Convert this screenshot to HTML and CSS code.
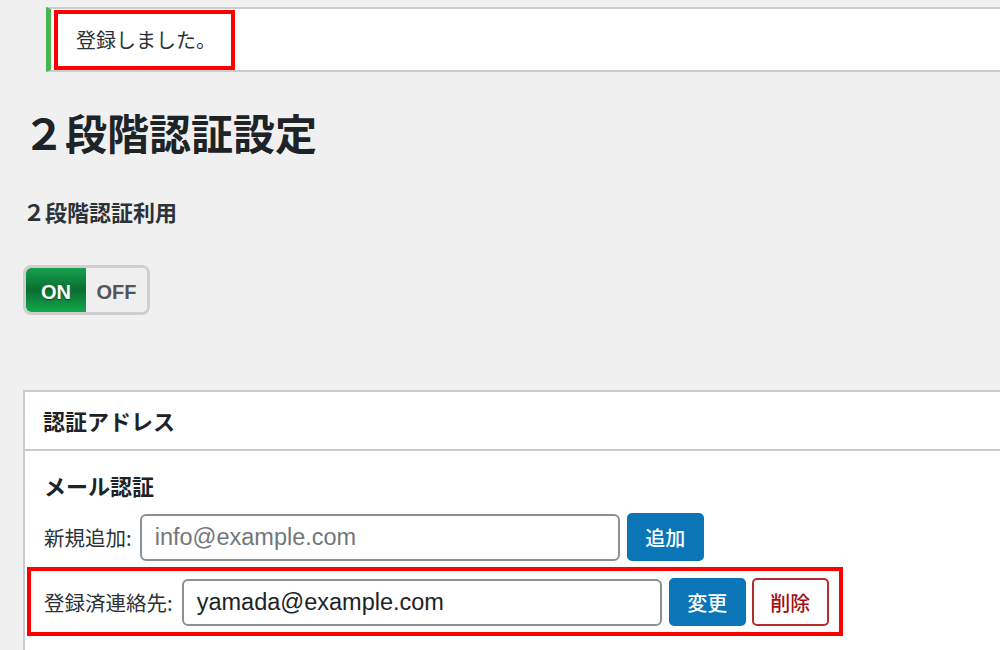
FILE: index.html
```html
<!DOCTYPE html>
<html lang="ja">

<head>
    <meta charset="UTF-8" />
    <meta name="viewport" content="width=device-width, initial-scale=1.0" />
    <title>２段階認証設定</title>
    <link rel="stylesheet" href="styles.css">
</head>

<body>
    <div class="wrap">
        <!-- 完了メッセージ -->
        <div class="notice">
            <p class="notice-text mark">登録しました。</p>
        </div>

        <h1 class="page-title">２段階認証設定</h1>
        <h2 class="sub-title">２段階認証利用</h2>

        <!-- ON / OFF スイッチ -->
        <div class="switch">
            <span class="switch-on">ON</span>
            <span class="switch-off">OFF</span>
        </div>

        <!-- 認証アドレス -->
        <section class="card">
            <div class="card-head">認証アドレス</div>
            <div class="card-body">
                <h3 class="card-title">メール認証</h3>

                <div class="addr-row">
                    <label class="addr-label" for="newAddr">新規追加:</label>
                    <input class="addr-input" id="newAddr" type="text" placeholder="info@example.com">
                    <button class="btn btn-primary" type="button">追加</button>
                </div>

                <div class="addr-row addr-row-saved mark">
                    <label class="addr-label" for="savedAddr">登録済連絡先:</label>
                    <input class="addr-input" id="savedAddr" type="text" value="yamada@example.com">
                    <button class="btn btn-primary" type="button">変更</button>
                    <button class="btn btn-danger" type="button">削除</button>
                </div>
            </div>
        </section>
    </div>
</body>

</html>
```

FILE: styles.css
```css
body {
    margin: 0;
    background: #f0f0f1;
    color: #1d2327;
    font-family: "Noto Sans CJK JP", sans-serif;
    overflow: hidden;
}

.wrap {
    padding: 7px 0 0 23px;
    margin-right: -40px;
}

/* 赤枠の注釈 */
.mark {
    border: 4px solid #ff0000;
}

/* 完了メッセージ */
.notice {
    margin-left: 23px;
    padding: 1px 0 0 3px;
    background: #fff;
    border-top: 2px solid #c9ccd0;
    border-bottom: 2px solid #c9ccd0;
    border-left: 5px solid #46b450;
    box-sizing: border-box;
    height: 65px;
}

.notice-text {
    margin: 0;
    display: inline-block;
    box-sizing: border-box;
    width: 181px;
    height: 60px;
    padding-left: 18px;
    font-size: 20px;
    line-height: 52px;
    color: #2c3338;
}

.page-title {
    margin: 39px 0 0 0;
    font-size: 42px;
    line-height: 1;
    font-weight: 700;
}

.sub-title {
    margin: 47px 0 0 0;
    font-size: 22px;
    line-height: 1;
    font-weight: 700;
    color: #2c3338;
}

/* ON / OFF スイッチ */
.switch {
    margin-top: 43px;
    display: inline-flex;
    width: 127px;
    height: 50px;
    box-sizing: border-box;
    border: 3px solid #cfcfcf;
    border-radius: 8px;
    overflow: hidden;
    background: #f1f1f1;
    font-family: "Liberation Sans", sans-serif;
    font-size: 20px;
    font-weight: 700;
}

.switch-on,
.switch-off {
    display: flex;
    align-items: center;
    justify-content: center;
    padding-top: 4px;
}

.switch-on {
    width: 60px;
    color: #fff;
    background: linear-gradient(#18a04c, #0a6e32 50%, #12a84a);
    border-radius: 5px 0 0 5px;
    text-shadow: 0 1px 1px rgba(0, 0, 0, 0.5);
}

.switch-off {
    flex: 1;
    color: #555;
    background: #efefef;
}

/* 認証アドレス */
.card {
    margin-top: 75px;
    background: #fff;
    border-top: 2px solid #c8ccd0;
    border-left: 2px solid #c8ccd0;
}

.card-head {
    height: 57px;
    padding-left: 18px;
    border-bottom: 2px solid #c8ccd0;
    font-size: 22px;
    font-weight: 700;
    line-height: 57px;
}

.card-body {
    padding: 23px 0 30px 2px;
}

.card-title {
    margin: 0 0 17px 17px;
    font-size: 22px;
    line-height: 1;
    font-weight: 700;
}

.addr-row {
    display: flex;
    align-items: center;
    gap: 7px;
    padding-left: 17px;
}

.addr-row-saved {
    display: inline-flex;
    margin-top: 6px;
    padding: 7px 10px 6px 13px;
}

.addr-row-saved .addr-label {
    margin-right: 2px;
}

.addr-row-saved .btn-danger {
    margin-left: -1px;
}

.addr-label {
    margin-right: 1px;
    font-size: 20.5px;
    color: #2c3338;
}

.addr-input {
    width: 480px;
    height: 47px;
    box-sizing: border-box;
    padding: 0 12px 0 13px;
    border: 2px solid #8c8f94;
    border-radius: 6px;
    background: #fff;
    color: #1d2327;
    font-family: "Liberation Sans", sans-serif;
    font-size: 23.5px;
}

.addr-input::placeholder {
    color: #72777c;
}

.btn {
    width: 77px;
    height: 48px;
    box-sizing: border-box;
    border-radius: 5px;
    font-family: "Noto Sans CJK JP", sans-serif;
    font-size: 20px;
    font-weight: 500;
    cursor: pointer;
}

.btn-primary {
    border: 2px solid #0a75b7;
    background: #0a75b7;
    color: #fff;
}

.btn-danger {
    border: 2px solid #b32d2e;
    background: #fff;
    color: #a30f10;
}
```
